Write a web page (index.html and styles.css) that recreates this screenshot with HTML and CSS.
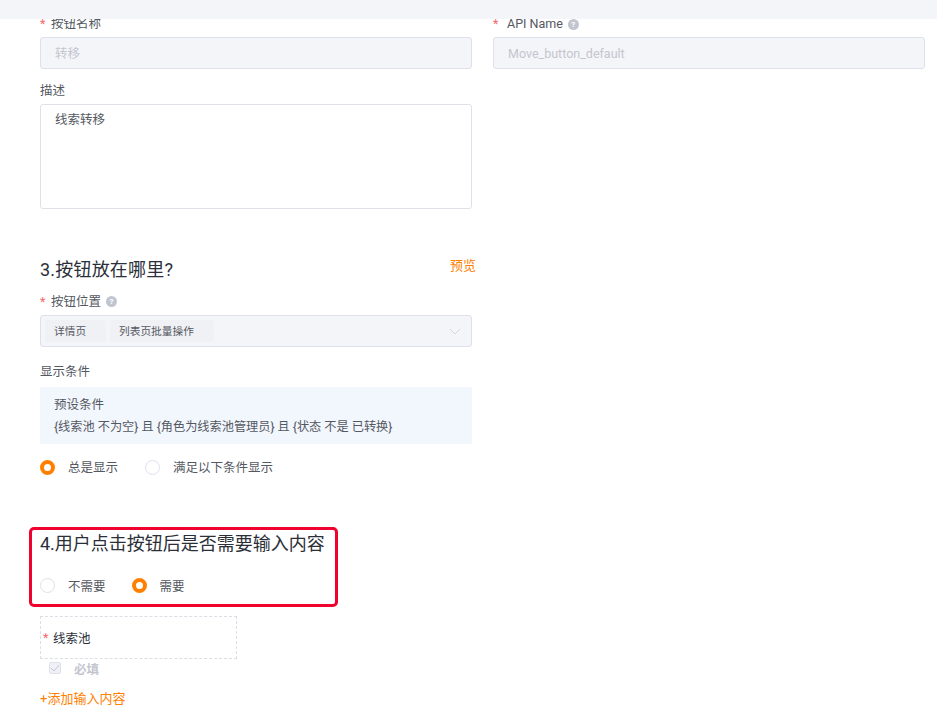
FILE: index.html
```html
<!DOCTYPE html>
<html lang="zh-CN">
<head>
<meta charset="utf-8">
<title>按钮设置</title>
<link rel="stylesheet" href="styles.css">
</head>
<body>
<div class="topbar"></div>
<main class="content">
  <div class="two-col">
    <div class="field">
      <div class="label"><span class="req">*</span>按钮名称</div>
      <div class="input disabled">转移</div>
    </div>
    <div class="field">
      <div class="label"><span class="req req-wide">*</span>API Name<span class="help">?</span></div>
      <div class="input disabled">Move_button_default</div>
    </div>
  </div>
  <div class="col">
    <div class="label desc-label">描述</div>
    <div class="textarea">线索转移</div>

    <div class="section-head">
      <h2 class="title">3.按钮放在哪里?</h2>
      <span class="preview">预览</span>
    </div>
    <div class="label pos-label"><span class="req">*</span>按钮位置<span class="help">?</span></div>
    <div class="select">
      <span class="tag tag-a">详情页</span>
      <span class="tag tag-b">列表页批量操作</span>
      <svg class="chev" width="12" height="7" viewBox="0 0 12 7"><path d="M1 1l5 5 5-5" fill="none" stroke="#d5d8e2" stroke-width="1"/></svg>
    </div>
    <div class="label cond-label">显示条件</div>
    <div class="preset">
      <div class="preset-title">预设条件</div>
      <div class="preset-text">{线索池 不为空} 且 {角色为线索池管理员} 且 {状态 不是 已转换}</div>
    </div>
    <div class="radios radios-show">
      <span class="radio on"></span><span class="radio-text text-always">总是显示</span>
      <span class="radio"></span><span class="radio-text">满足以下条件显示</span>
    </div>
  </div>

  <section class="highlight">
    <h2 class="title">4.用户点击按钮后是否需要输入内容</h2>
    <div class="radios radios-need">
      <span class="radio"></span><span class="radio-text text-noneed">不需要</span>
      <span class="radio on"></span><span class="radio-text">需要</span>
    </div>
  </section>

  <div class="dashed"><span class="req req-small">*</span>线索池</div>
  <div class="check-row">
    <span class="checkbox"><svg width="10" height="8" viewBox="0 0 10 8"><path d="M1 4l3 3 5-6" fill="none" stroke="#c3c7d3" stroke-width="1"/></svg></span>
    <span class="check-text">必填</span>
  </div>
  <div class="add">+添加输入内容</div>
</main>
</body>
</html>
```
FILE: styles.css
```css
* { box-sizing: border-box; }
html, body { margin: 0; height: 720px; overflow: hidden; background: #fff; }
body { font-family: "Roboto", "Noto Sans CJK SC", sans-serif; font-size: 12.5px; color: #545861; }
.topbar { height: 19px; background: #f4f5f9; position: relative; z-index: 2; }
.content { padding-left: 40px; margin-top: -4px; }
.two-col { display: flex; gap: 21px; }
.field { width: 432px; }
.col { width: 432px; }
.label { height: 18px; line-height: 18px; display: flex; align-items: center; color: #545861; }
.req { color: #f5656b; width: 11px; flex: none; }
.req-wide { width: 14px; }
.help { width: 11px; height: 11px; border-radius: 50%; background: #c1c5d0; color: #fff; font-size: 8px; line-height: 11px; text-align: center; margin-left: 5px; font-weight: 700; }
.input { height: 32px; margin-top: 4px; border: 1px solid #dfe1ea; border-radius: 3px; line-height: 30px; padding: 1px 0 0 14px; }
.disabled { background: #f4f5f9; color: #c3c6cf; }
.desc-label { margin-top: 12px; padding-top: 1px; }
.textarea { height: 105px; margin-top: 5px; border: 1px solid #dfe1ea; border-radius: 3px; padding: 6px 14px; line-height: 18px; }
.section-head { position: relative; margin-top: 47px; height: 26px; }
.title { margin: 0; font-size: 18px; font-weight: 400; line-height: 26px; color: #2b2f38; }
.section-head .title { padding-top: 1px; letter-spacing: 0.2px; }
.preview { position: absolute; left: 410px; top: 1px; font-size: 13px; line-height: 18px; color: #ff8000; white-space: nowrap; }
.pos-label { margin-top: 10px; padding-top: 1px; }
.select { height: 32px; margin-top: 5px; border: 1px solid #dfe1ea; border-radius: 3px; background: #f4f5f9; display: flex; align-items: center; padding-left: 4px; gap: 4px; position: relative; }
.tag { height: 22px; line-height: 22px; padding-top: 1px; background: #f0f1f5; border-radius: 2px; font-size: 10.7px; padding-left: 9px; color: #545861; }
.tag-a { width: 61px; }
.tag-b { width: 104px; }
.chev { position: absolute; right: 10px; top: 12px; }
.cond-label { margin-top: 15px; padding-top: 1px; }
.preset { height: 57px; margin-top: 7px; background: #f2f6fd; padding: 9px 14px 0; }
.preset-title { line-height: 18px; }
.preset-text { line-height: 18px; margin-top: 4px; font-size: 12.2px; white-space: nowrap; }
.radios { display: flex; align-items: center; height: 16px; }
.radios-show { margin-top: 15px; }
.radios-show .radio-text { padding-bottom: 2px; }
.radio { width: 15px; height: 15px; border-radius: 50%; border: 1px solid #dfe1ea; flex: none; background: #fff; }
.radio.on { border: 4px solid #ff8000; }
.radio-text { margin-left: 13px; color: #545861; }
.text-always { margin-right: 27px; }
.highlight { width: 309px; height: 80px; margin: 52px 0 0 -11px; border: 3px solid #f0022f; border-radius: 5px; padding: 1px 0 0 8px; }
.highlight .title { height: 26px; line-height: 26px; }
.radios-need { margin-top: 20px; }
.text-noneed { margin-right: 26px; }
.dashed { width: 197px; height: 43px; margin-top: 9px; border: 1px dashed #dcdee6; display: flex; align-items: center; padding-left: 2px; color: #2b2f38; }
.req-small { width: 10px; }
.check-row { display: flex; align-items: center; height: 18px; padding-left: 9px; }
.checkbox { width: 12px; height: 12px; border: 1px solid #dfe1ea; background: #f0f1f6; border-radius: 2px; display: flex; align-items: center; justify-content: center; }
.check-text { margin-left: 13px; color: #c3c6cf; font-weight: 700; }
.add { margin-top: 13px; height: 18px; line-height: 18px; font-size: 13px; color: #ff8000; }
```
